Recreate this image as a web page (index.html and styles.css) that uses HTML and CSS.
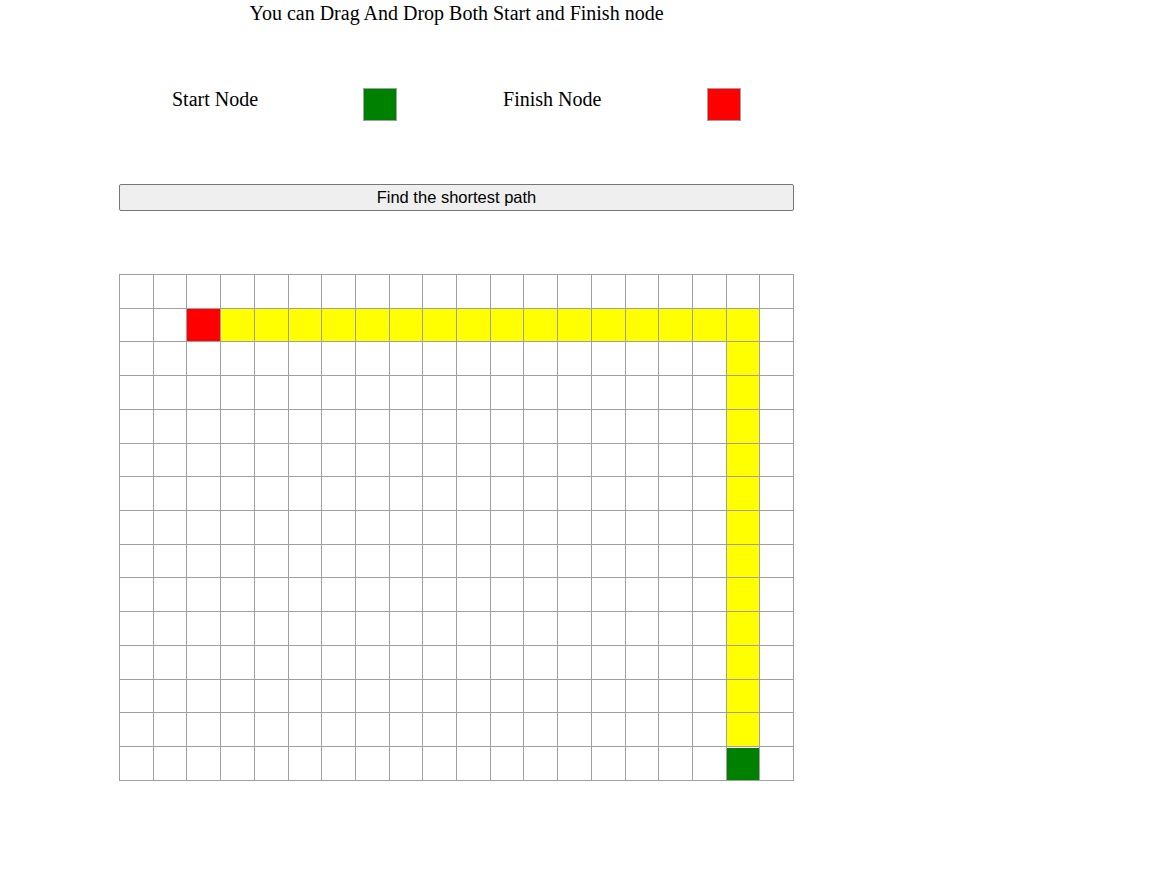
FILE: index.html
```html
<!DOCTYPE html>
<html>
<head>
<meta charset="utf-8">
<link rel="stylesheet" href="styles.css">
</head>
<body>
<div class="app">
  <p class="title">You can Drag And Drop Both Start and Finish node</p>
  <div class="legend">
    <span class="legend-label label-start">Start Node</span>
    <span class="legend-box box-start"></span>
    <span class="legend-label label-finish">Finish Node</span>
    <span class="legend-box box-finish"></span>
  </div>
  <button class="find-btn">Find the shortest path</button>
  <div class="grid" id="grid"></div>
</div>
<script src="script.js"></script>
</body>
</html>
```

FILE: styles.css
```css
html, body {
  margin: 0;
  padding: 0;
  background: #ffffff;
}
body {
  font-family: "Liberation Serif", "Times New Roman", serif;
  color: #000;
}
.app {
  width: 675px;
  margin-left: 119px;
  display: flex;
  flex-direction: column;
}
.title {
  margin: 2px 0 0 0;
  font-size: 20px;
  line-height: 23px;
  text-align: center;
}
.legend {
  display: flex;
  align-items: flex-start;
  margin-top: 63px;
  height: 33px;
}
.legend-label {
  font-size: 20px;
  line-height: 23px;
  margin-top: 0;
}
.label-start { margin-left: 53px; }
.label-finish { margin-left: 106px; }
.legend-box {
  width: 32px;
  height: 31px;
  border: 1px solid #a0a0a0;
}
.box-start { background: #008000; margin-left: 105px; }
.box-finish { background: #ff0000; margin-left: 106px; }
.find-btn {
  margin-top: 63px;
  height: 27px;
  width: 675px;
  padding: 0;
  background: #efefef;
  border: 1px solid #767676;
  border-radius: 2px;
  font-family: "Liberation Sans", Arial, sans-serif;
  font-size: 16.5px;
  color: #000;
}
.grid {
  margin-top: 63px;
  display: grid;
  grid-template-columns: repeat(20, 1fr);
  grid-auto-rows: 33.73px;
  border-top: 1px solid #a0a0a0;
  border-left: 1px solid #a0a0a0;
  width: 674px;
}
.cell {
  border-right: 1px solid #a0a0a0;
  border-bottom: 1px solid #a0a0a0;
  background: #ffffff;
}
.cell.path { background: #ffff00; }
.cell.finish { background: #ff0000; }
.cell.start { background: #008000; box-shadow: inset 0 1px 0 #ffffff; }
```

FILE: script.js
```js
var grid = document.getElementById('grid');
for (var r = 0; r < 15; r++) {
  for (var c = 0; c < 20; c++) {
    var d = document.createElement('div');
    d.className = 'cell';
    if (r === 1 && c === 2) d.className += ' finish';
    else if (r === 14 && c === 18) d.className += ' start';
    else if ((r === 1 && c > 2 && c <= 18) || (c === 18 && r > 1 && r < 14)) d.className += ' path';
    grid.appendChild(d);
  }
}
```
